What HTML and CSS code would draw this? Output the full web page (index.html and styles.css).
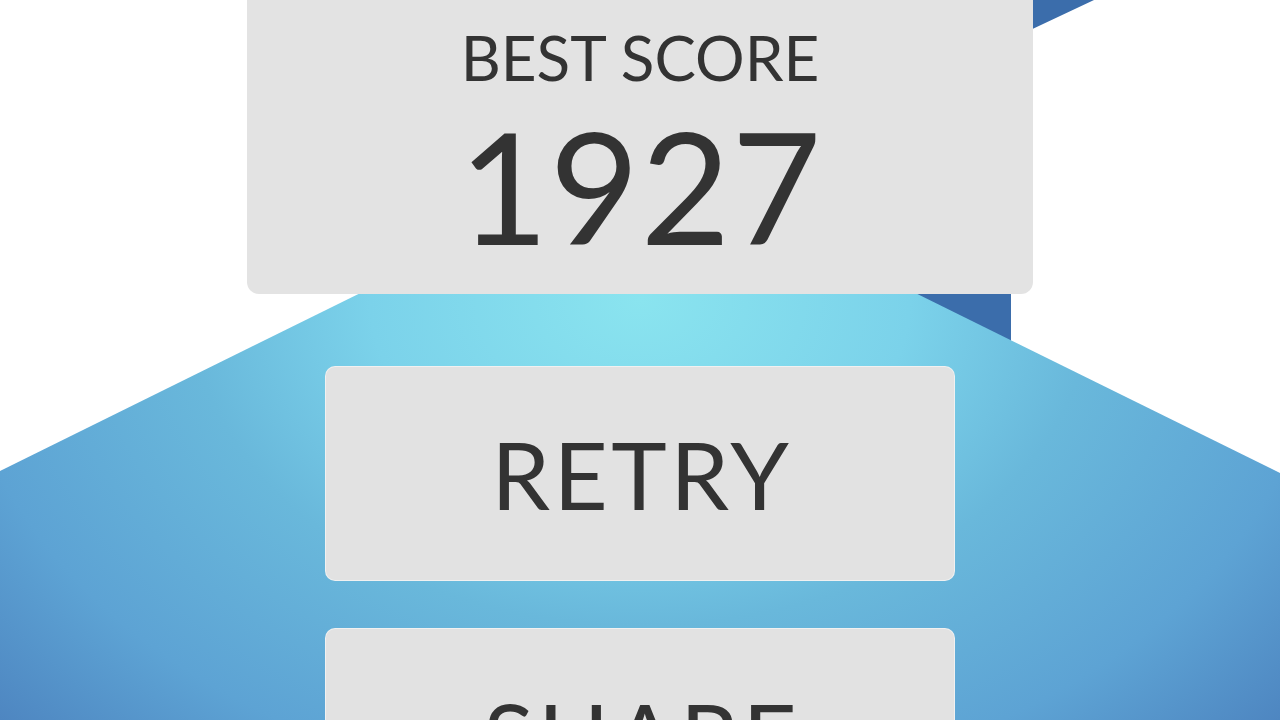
FILE: index.html
```html
<!DOCTYPE html>
<html lang="en">
<head>
<meta charset="utf-8">
<title>Best Score</title>
<link rel="stylesheet" href="styles.css">
</head>
<body>
<svg class="backdrop" width="1280" height="720" viewBox="0 0 1280 720" aria-hidden="true">
  <defs>
    <radialGradient id="glow" gradientUnits="userSpaceOnUse" cx="640" cy="300" r="650" gradientTransform="matrix(1.3846 0 0 1 -246.15 0)">
      <stop offset="0" stop-color="#8ae4ef"/>
      <stop offset="0.3" stop-color="#7bd2ea"/>
      <stop offset="0.5" stop-color="#69b8db"/>
      <stop offset="0.76" stop-color="#5da3d4"/>
      <stop offset="0.96" stop-color="#4e86c1"/>
      <stop offset="1" stop-color="#4c82be"/>
    </radialGradient>
  </defs>
  <polygon points="880,0 1094,0 1011,39 1011,345 880,345" fill="#3b6dab"/>
  <polygon points="638,156 1280,473 1280,720 0,720 0,471" fill="url(#glow)"/>
</svg>
<main class="screen">
  <section class="score-card">
    <div class="score-label">BEST SCORE</div>
    <div class="score-value">1927</div>
  </section>
  <div class="actions">
    <button class="action">RETRY</button>
    <button class="action">SHARE</button>
  </div>
</main>
</body>
</html>
```

FILE: styles.css
```css
html, body {
  margin: 0;
  padding: 0;
}
body {
  width: 1280px;
  height: 720px;
  overflow: hidden;
  background: #ffffff;
  position: relative;
  font-family: Lato, "Open Sans", sans-serif;
  color: #333333;
}
.backdrop {
  position: absolute;
  left: 0;
  top: 0;
  z-index: 0;
}
.screen {
  position: relative;
  z-index: 1;
  display: flex;
  flex-direction: column;
  align-items: center;
}
.score-card {
  box-sizing: border-box;
  width: 786px;
  height: 314px;
  margin-top: -20px;
  padding-top: 52px;
  background: #e3e3e3;
  border-radius: 12px;
  display: flex;
  flex-direction: column;
  align-items: center;
}
.score-label {
  font-size: 62px;
  line-height: 50px;
  font-weight: 400;
}
.score-value {
  margin-top: 38px;
  font-size: 155px;
  line-height: 130px;
  font-weight: 400;
  letter-spacing: 1px;
  padding-left: 1px;
}
.actions {
  margin-top: 72px;
  display: flex;
  flex-direction: column;
  gap: 47px;
}
.action {
  box-sizing: border-box;
  width: 630px;
  height: 215px;
  border: 1px solid rgba(255,255,255,0.5);
  border-radius: 10px;
  background: #e2e2e2;
  color: #333333;
  font-family: Lato, "Open Sans", sans-serif;
  font-size: 94px;
  line-height: 94px;
  font-weight: 400;
  letter-spacing: 3.5px;
  padding: 0 0 0 3.5px;
  display: flex;
  align-items: center;
  justify-content: center;
}
```
